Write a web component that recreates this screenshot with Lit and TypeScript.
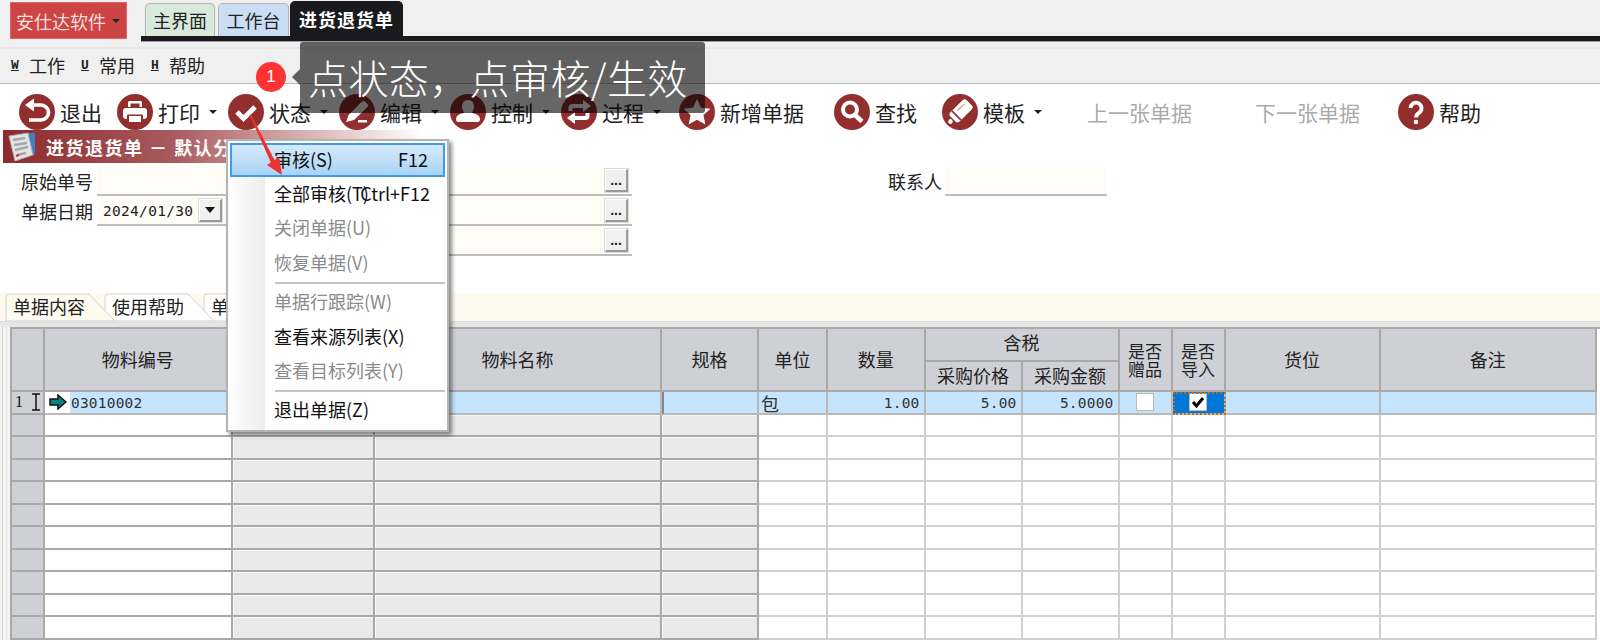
import { LitElement, html, css, svg } from "lit";
import { customElement } from "lit/decorators.js";

const W = "#fff";
const icons: Record<string, unknown> = {
  exit: svg`<path d="M14 11h8a7.5 7.5 0 0 1 0 15H10" fill="none" stroke=${W} stroke-width="3.6"/><path d="M6 11l9-6.5v13z" fill=${W}/>`,
  print: svg`<path d="M11 13V8.500A1.500 1.500 0 0 1 12.500 7h11A1.500 1.500 0 0 1 25 8.500V13h-2.500V9.500h-9V13z" fill=${W}/><rect x="6" y="14" width="24" height="11" rx="3" fill=${W}/><rect x="10" y="20.500" width="16" height="8" rx="1" fill="#922e2e"/><rect x="12" y="22" width="12" height="6" fill=${W}/>`,
  check: svg`<path d="M9 18l6.500 6.500L27 13" fill="none" stroke=${W} stroke-width="5"/>`,
  edit: svg`<path d="M7 28l2.500-7L23 7.500a2 2 0 0 1 3 0l2.500 2.500a2 2 0 0 1 0 3L15 26z" fill=${W}/><rect x="19" y="26" width="9" height="2.500" fill=${W}/>`,
  person: svg`<path d="M18 6c3.500 0 6 2.800 6 6.500 0 2.800-1 4.800-2.500 6.200 3.500.8 8.500 2.300 8.500 6.300 0 1.800-1 3-2.500 3H8.500C7 28 6 26.800 6 25c0-4 5-5.500 8.500-6.300-1.500-1.400-2.500-3.400-2.500-6.200C12 8.800 14.500 6 18 6z" fill=${W}/>`,
  flow: svg`<path d="M9.500 17v-3a2 2 0 0 1 2-2H23" fill="none" stroke=${W} stroke-width="4"/><path d="M22 6l8 6-8 6z" fill=${W}/><path d="M26.500 19v3a2 2 0 0 1-2 2H13" fill="none" stroke=${W} stroke-width="4"/><path d="M14 18l-8 6 8 6z" fill=${W}/>`,
  star: svg`<path d="M18 5l4 8.800 9.500 1-7.100 6.300 2 9.400L18 25.700 9.600 30.500l2-9.400L4.500 14.800l9.500-1z" fill=${W}/>`,
  search: svg`<circle cx="16" cy="15.500" r="7" fill="none" stroke=${W} stroke-width="4"/><path d="M21 21l7 6.500" stroke=${W} stroke-width="4.500"/>`,
  eraser: svg`<g transform="rotate(-45 18 18)"><rect x="8" y="11.500" width="23" height="13" rx="3" fill=${W}/><circle cx="4.500" cy="18" r="2.300" fill=${W}/><path d="M13 11.500v13" stroke="#922e2e" stroke-width="1.600"/><rect x="17" y="14.500" width="10" height="1.500" fill="#d9a9a9"/></g>`,
  help: svg`<path d="M12.500 14a5.500 5.500 0 1 1 8.500 4.800c-2 1.300-3 2-3 4.700" fill="none" stroke=${W} stroke-width="3.800"/><circle cx="18" cy="28" r="2.300" fill=${W}/>`,
};

interface Tool { icon?: string; label: string; width: number; caret?: boolean; off?: boolean }
const tools: Tool[] = [
  { icon: "exit", label: "退出", width: 98 },
  { icon: "print", label: "打印", width: 111, caret: true },
  { icon: "check", label: "状态", width: 111, caret: true },
  { icon: "edit", label: "编辑", width: 111, caret: true },
  { icon: "person", label: "控制", width: 111, caret: true },
  { icon: "flow", label: "过程", width: 118, caret: true },
  { icon: "star", label: "新增单据", width: 155 },
  { icon: "search", label: "查找", width: 108 },
  { icon: "eraser", label: "模板", width: 145, caret: true },
  { label: "上一张单据", width: 168, off: true },
  { label: "下一张单据", width: 143, off: true },
  { icon: "help", label: "帮助", width: 100 },
];

type MenuEntry = { label?: string; key?: string; off?: boolean; sel?: boolean; sep?: boolean };
const menu: MenuEntry[] = [
  { label: "审核(S)", key: "F12", sel: true },
  { label: "全部审核(T)", key: "Ctrl+F12" },
  { label: "关闭单据(U)", off: true },
  { label: "恢复单据(V)", off: true },
  { sep: true },
  { label: "单据行跟踪(W)", off: true },
  { label: "查看来源列表(X)" },
  { label: "查看目标列表(Y)", off: true },
  { sep: true },
  { label: "退出单据(Z)" },
];

const cols = [33, 187.5, 142.5, 287, 97, 69, 97.5, 97, 97, 53, 53, 155, 216.5];

@customElement("app-root")
export class AppRoot extends LitElement {
  static styles = css`
    :host {
      display: block; width: 1600px; height: 640px; overflow: hidden; position: relative;
      background: #fff; color: #222; font-family: "Noto Sans CJK SC", "Noto Sans", sans-serif; font-size: 18px;
    }
    .top { display: flex; height: 42px; background: #f0f0f0; }
    .brand {
      margin: 2px 0 0 10px; width: 117px; height: 37px; background: #cc4444; color: #f8dfdf; display: flex;
      align-items: center; padding-left: 5px; box-sizing: border-box; gap: 6px; border: 1px solid #d66;
    }
    .tabcol { flex: 1; margin-left: 14px; display: flex; flex-direction: column; }
    .tabs { display: flex; height: 36px; align-items: flex-end; padding-left: 4px; }
    .tab {
      height: 33px; box-sizing: border-box; display: flex; align-items: center; justify-content: center;
      border: 1px solid #b5b5b5; border-bottom: 0; border-radius: 5px 5px 0 0; margin-right: 3px;
    }
    .t1 { width: 70px; background: #d8eadb; }
    .t2 { width: 71px; background: #c9def4; margin-right: 1px; }
    .t3 {
      width: 113px; height: 35px; background: #1a1a1e; color: #fff; font-weight: 700; letter-spacing: 1px;
      border-color: #1a1a1e;
    }
    .rule { height: 5px; background: #1a1a1e; border-bottom: 1px solid #999; }
    .caret { width: 0; height: 0; border: 4px solid transparent; border-top: 4px solid #222; border-bottom: 0; flex: none; }
    .menubar {
      height: 42px; box-sizing: border-box; background: #f0f0f0; display: flex; align-items: center; padding: 5px 0 0 11px;
      border-bottom: 1px solid #bbb; box-shadow: inset 0 5px 0 #f0f0f0, inset 0 7px 0 #e6e6e6;
    }
    .mi { display: flex; align-items: center; margin-right: 16px; }
    .mi u { font: bold 13px "Liberation Mono", monospace; width: 18px; }
    .toolbar { height: 46px; display: flex; align-items: flex-start; padding: 10px 0 0 19px; box-sizing: border-box; }
    .tool { display: flex; align-items: center; height: 36px; font-size: 21px; flex: none; }
    .tool svg { width: 36px; height: 36px; margin-right: 5px; flex: none; }
    .tool .caret { margin-left: 9px; }
    .tool.off { color: #aaa; }
    .band {
      height: 33px; display: flex; align-items: center; margin-left: 3px; padding-left: 3px; gap: 10px;
      background: linear-gradient(90deg, #8e2a2d 0, #a85a5d 170px, #d9b0b0 300px, #fff 420px); color: #fff; font-weight: 700;
      white-space: pre; letter-spacing: 1.5px;
    }
    .band svg { width: 30px; height: 30px; flex: none; }
    .form { height: 130px; box-sizing: border-box; padding-top: 4px; }
    .row { display: flex; height: 30px; }
    .lab { width: 97px; padding-left: 21px; box-sizing: border-box; line-height: 28px; flex: none; }
    .field {
      background: #fdfdf5; border-bottom: 2px solid #bdbdbd; height: 29px; box-sizing: border-box; display: flex;
      align-items: center; justify-content: flex-end; padding-right: 4px; flex: none;
    }
    .f1 { width: 535px; }
    .f2 { width: 128px; justify-content: space-between; padding-left: 6px; padding-right: 3px; }
    .f3 { width: 407px; }
    .f4 { width: 162px; }
    .blank { width: 130px; flex: none; }
    .f3n { width: 405px; }
    .date { font: 14.500px "DejaVu Sans Mono", monospace; letter-spacing: 0.300px; }
    .btn {
      width: 23px; height: 23px; box-sizing: border-box; background: #f0f0f0; border: 1px solid #fff;
      border-right: 2px solid #999; border-bottom: 2px solid #999; box-shadow: 0 0 0 1px #ddd;
      display: flex; align-items: center; justify-content: center; font: bold 14px "Liberation Sans", sans-serif; color: #222;
      line-height: 14px;
    }
    .btn .caret { border-width: 6px 5px 0; border-top-color: #111; }
    .contact { margin-left: 256px; width: 57px; flex: none; line-height: 28px; }
    .strip {
      height: 29px; background: #fffaef; display: flex; align-items: flex-end; padding-left: 5px; box-sizing: border-box;
      border-bottom: 1px solid #ddd;
    }
    .dtab { position: relative; width: 111px; height: 28px; margin-right: -12px; flex: none; }
    .dtab:nth-child(1) { z-index: 3; }
    .dtab:nth-child(2) { z-index: 2; }
    .dtab svg { position: absolute; inset: 0; width: 100%; height: 100%; }
    .dtab span { position: relative; display: block; padding: 0 0 0 8px; line-height: 27px; }
    .wrap {
      padding: 5px 0 0 11px; height: 318px; box-sizing: border-box;
      background: linear-gradient(#e6e6e6, #e6e6e6) 0 0 / 100% 5px no-repeat,
        linear-gradient(90deg, #f4f4f4 0 2px, #ccc 2px 3px, #f6f6f6 3px 6px, #ddd 6px 7px, #f4f4f4 7px 10px, #fff 10px);
    }
    .grid { display: grid; grid-auto-rows: 22.5px; border-top: 2px solid #aaa; border-left: 2px solid #aaa; margin-left: -1px; }
    .c { box-sizing: border-box; border-right: 2px solid #cfcfcf; border-bottom: 2px solid #cfcfcf; background: #fff; min-width: 0; }
    .hd {
      background: #cfd0d5; border-color: #a9a9a9; display: flex; align-items: center; justify-content: center;
      text-align: center; line-height: 18px; padding-bottom: 2px;
    }
    .grp { padding-bottom: 6px; }
    .stack { padding: 0; font-size: 17px; line-height: 18px; }
    .rh { background: #cfd0d5; border-color: #a9a9a9; }
    .rh1 { display: flex; align-items: center; font: 16px "Liberation Serif", serif; padding-left: 3px; color: #111; }
    .rh1 svg { margin-left: 8px; }
    .dk { border-color: #a9a9a9; }
    .gy { background: #e9e9e9; border-color: #a9a9a9; box-shadow: inset 1px 1px 0 #f8f8f8; }
    .sel {
      background: #c5e4fd; border-color: #b9b9b9; display: flex; align-items: center; padding-top: 1px;
      font: 14.500px "DejaVu Sans Mono", monospace; letter-spacing: 0.200px; color: #333;
    }
    .sel.r { justify-content: flex-end; padding-right: 4px; }
    .sel.cjk { font: 18px/18px "Noto Sans CJK SC", sans-serif; padding-left: 2px; }
    .sel.ctr { justify-content: center; padding-top: 0; }
    .sel.dl { border-left: 2px solid #888; }
    .first { padding-top: 0; }
    .first b { font-weight: 400; padding-top: 1px; }
    .mark { width: 25px; height: 100%; background: #fff; display: flex; align-items: center; justify-content: center; margin-right: 1px; flex: none; }
    .focus { background: #0078d7; outline: 2px dotted #c26a1c; outline-offset: -2px; }
    .cb { width: 18px; height: 18px; box-sizing: border-box; background: #fff; border: 1.500px solid #bbb; display: flex; align-items: center; justify-content: center; }
    .tip {
      position: absolute; left: 300px; top: 42px; width: 405px; height: 71px; background: rgba(0, 0, 0, 0.6); color: #fff;
      font-size: 40px; font-weight: 300; letter-spacing: 0.400px; line-height: 71px; padding-left: 8px; box-sizing: border-box;
      border-radius: 3px; white-space: nowrap;
    }
    .tip::before {
      content: ""; position: absolute; left: -8px; top: 27px; border: 8px solid transparent;
      border-right-color: rgba(0, 0, 0, 0.6); border-left: 0;
    }
    .badge {
      position: absolute; left: 256px; top: 62px; width: 30px; height: 30px; border-radius: 50%; background: #f33; color: #fff;
      display: flex; align-items: center; justify-content: center; font: 17px "Liberation Sans", sans-serif;
    }
    .menu {
      position: absolute; left: 226px; top: 139px; width: 223px; height: 293px; box-sizing: border-box; padding: 2px;
      border: 2px solid #b4b4b4; box-shadow: 3px 3px 4px rgba(0, 0, 0, 0.45);
      background: linear-gradient(90deg, #fff 0, #ececec 37px, #fff 37px);
    }
    .item { height: 34.400px; box-sizing: border-box; display: flex; align-items: center; padding: 0 0 3px 44px; position: relative; white-space: nowrap; color: #111; }
    .item.off { color: #8b8b8b; }
    .item.on { background: linear-gradient(#d6e9fb, #a9d3f6); border: 2px solid #3f9be6; padding-left: 42px; }
    .key { position: absolute; right: 15px; top: 50%; transform: translateY(-50%); margin-top: -1.500px; }
    .sep { height: 5px; display: flex; align-items: center; padding-left: 45px; }
    .sep i { display: block; flex: 1; height: 2px; background: #c4c4c4; }
    .arrow { position: absolute; left: 240px; top: 110px; width: 50px; height: 70px; }
  `;

  private renderCells() {
    const cells: unknown[] = [];
    const hd = (txt: unknown, col: string, row: string, extra = "") =>
      cells.push(html`<div class="c hd ${extra}" style="grid-column:${col};grid-row:${row}">${txt}</div>`);
    hd("", "1", "1 / 3");
    hd("物料编号", "2", "1 / 3");
    hd("", "3", "1 / 3");
    hd("物料名称", "4", "1 / 3");
    hd("规格", "5", "1 / 3");
    hd("单位", "6", "1 / 3");
    hd("数量", "7", "1 / 3");
    hd("含税", "8 / 10", "1", "grp");
    hd("采购价格", "8", "2");
    hd("采购金额", "9", "2");
    hd(html`是否<br />赠品`, "10", "1 / 3", "stack");
    hd(html`是否<br />导入`, "11", "1 / 3", "stack");
    hd("货位", "12", "1 / 3");
    hd("备注", "13", "1 / 3");

    const arrow = html`<svg width="18" height="16" viewBox="0 0 18 16"><path d="M1 5h8V1l8 7-8 7v-4H1z" fill="#0a8080" stroke="#111" stroke-width="1.500"/></svg>`;
    const ibeam = html`<svg width="10" height="18" viewBox="0 0 10 18"><path d="M1 1h8M1 17h8M5 1v16" stroke="#111" stroke-width="1.500" fill="none"/></svg>`;
    const tick = html`<svg width="14" height="14" viewBox="0 0 14 14"><path d="M2 7l3.500 4L12 3" fill="none" stroke="#000" stroke-width="3"/></svg>`;
    cells.push(html`
      <div class="c rh rh1">1${ibeam}</div>
      <div class="c sel first"><span class="mark">${arrow}</span><b>03010002</b></div>
      <div class="c sel"></div>
      <div class="c sel"></div>
      <div class="c sel dl"></div>
      <div class="c sel cjk">包</div>
      <div class="c sel r">1.00</div>
      <div class="c sel r">5.00</div>
      <div class="c sel r">5.0000</div>
      <div class="c sel ctr"><span class="cb"></span></div>
      <div class="c sel ctr focus"><span class="cb">${tick}</span></div>
      <div class="c sel"></div>
      <div class="c sel"></div>
    `);
    for (let r = 0; r < 10; r++) {
      cols.forEach((_, i) => {
        const cls = i === 0 ? "rh" : i === 1 ? "dk" : i <= 4 ? "gy" : "";
        cells.push(html`<div class="c ${cls}"></div>`);
      });
    }
    return cells;
  }

  render() {
    const tmpl = cols.map((c) => c + "px").join(" ");
    return html`
      <div class="top">
        <div class="brand">安仕达软件<span class="caret"></span></div>
        <div class="tabcol">
          <div class="tabs">
            <div class="tab t1">主界面</div>
            <div class="tab t2">工作台</div>
            <div class="tab t3">进货退货单</div>
          </div>
          <div class="rule"></div>
        </div>
      </div>
      <div class="menubar">
        <div class="mi"><u>W</u>工作</div>
        <div class="mi"><u>U</u>常用</div>
        <div class="mi"><u>H</u>帮助</div>
      </div>
      <div class="toolbar">
        ${tools.map(
          (t) => html`<div class="tool ${t.off ? "off" : ""}" style="width:${t.width}px">
            ${t.icon
              ? html`<svg viewBox="0 0 36 36"><circle cx="18" cy="18" r="18" fill="#922e2e"></circle>${icons[t.icon]}</svg>`
              : ""}
            <span>${t.label}</span>${t.caret ? html`<span class="caret"></span>` : ""}
          </div>`
        )}
      </div>
      <div class="band">
        <svg viewBox="0 0 30 30">
          <rect x="18" y="1" width="11" height="22" fill="#3f7fc4"></rect>
          <path d="M3 4l19-3 5 22-18 6z" fill="#e4e4e4" stroke="#aaa"></path>
          <path d="M7 8l12-2M8 13l13-2M9 18l13-3M11 23l9-2" stroke="#a8a8a8" stroke-width="2.500"></path>
          <path d="M10 24l3-1" stroke="#b33" stroke-width="2"></path>
        </svg>
        <span>进货退货单 － 默认分组</span>
      </div>
      <div class="form">
        <div class="row">
          <div class="lab">原始单号</div>
          <div class="field f1"><span class="btn">...</span></div>
          <div class="contact">联系人</div>
          <div class="field f4"></div>
        </div>
        <div class="row">
          <div class="lab">单据日期</div>
          <div class="field f2"><span class="date">2024/01/30</span><span class="btn"><span class="caret"></span></span></div>
          <div class="field f3"><span class="btn">...</span></div>
        </div>
        <div class="row">
          <div class="lab"></div>
          <div class="blank"></div>
          <div class="field f3n"><span class="btn">...</span></div>
        </div>
      </div>
      <div class="strip">
        ${[["单据内容", "#fdfbf0"], ["使用帮助", "#fff"], ["单据附件", "#fff"]].map(
          ([t, f]) => html`<div class="dtab">
            <svg viewBox="0 0 111 28" preserveAspectRatio="none"><path d="M1 28V4q0-3 3-3h80l26 27z" fill=${f} stroke="#d4d2c8"></path></svg>
            <span>${t}</span>
          </div>`
        )}
      </div>
      <div class="wrap">
        <div class="grid" style="grid-template-columns:${tmpl};grid-template-rows:33px 30px">${this.renderCells()}</div>
      </div>
      <div class="tip">点状态，点审核/生效</div>
      <div class="badge">1</div>
      <div class="menu">
        ${menu.map((m) =>
          m.sep
            ? html`<div class="sep"><i></i></div>`
            : html`<div class="item ${m.off ? "off" : ""} ${m.sel ? "on" : ""}">
                ${m.label}${m.key ? html`<span class="key">${m.key}</span>` : ""}
              </div>`
        )}
      </div>
      <svg class="arrow" viewBox="0 0 50 70">
        <path d="M9.500 5L11 4.500 37 55 33 57z" fill="#ee3030"></path>
        <path d="M42 65L27 55L39 47z" fill="#ee3030"></path>
      </svg>
    `;
  }
}
